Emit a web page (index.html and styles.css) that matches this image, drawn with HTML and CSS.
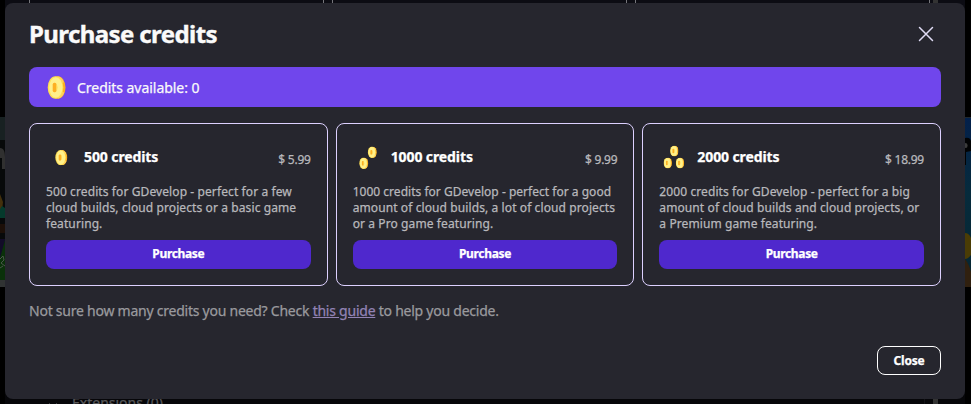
FILE: index.html
```
<!DOCTYPE html>
<html lang="en">
<head>
<meta charset="utf-8">
<title>Purchase credits</title>
<link rel="stylesheet" href="styles.css">
</head>
<body>
<svg class="defs" aria-hidden="true">
  <symbol id="coin" viewBox="0 0 18 23">
    <ellipse cx="10.2" cy="11.5" rx="7.8" ry="11.2" fill="#fdb022"/>
    <path d="M10 .3c3 .3 5.500 2.500 6.400 6L12 8zM12 15l4.800 1.500c-1.200 3.500-3.500 5.800-6.300 6.200z" fill="#ffcf5c"/>
    <ellipse cx="8" cy="11.500" rx="7.800" ry="11.300" fill="#ffe052"/>
    <ellipse cx="8.300" cy="11.500" rx="6.600" ry="10.300" fill="#fff08a"/>
    <rect x="5.200" y="6.800" width="3.800" height="9.400" rx="1.700" fill="#fdb022"/>
    <path d="M8.600 8v7q1.400-.6 1.400-3.500T8.600 8z" fill="#ffd54f"/>
  </symbol>
</svg>
<div class="backdrop">
  <div class="peek peek-top"><i></i><i></i><i></i><i></i><i></i><i></i><b></b></div>
  <svg class="art art-left" viewBox="0 0 5 170" preserveAspectRatio="none">
    <rect width="5" height="170" fill="#07090a"/>
    <rect width="5" height="23" fill="#182122"/>
    <path d="M0 31c4 0 5 4 5 9v12H2V41H0z" fill="#303030"/>
    <path d="M0 77l3 8-1 9-2 3z" fill="#43300c"/>
    <path d="M0 92l2-3 3 2v10H0z" fill="#053a2c"/>
    <path d="M0 107h5v9H0z" fill="#1c0f08"/>
    <path d="M0 122h5v10l-5 9z" fill="#120c28"/>
    <path d="M0 141l5-18v40H0z" fill="#0a310a"/>
    <path d="M0 142l3-3 1 4-3 3 4 3M0 151l3-2" stroke="#4b564b" fill="none"/>
    <rect y="163" width="5" height="7" fill="#303333"/>
  </svg>
  <svg class="art art-right" viewBox="0 0 6 170" preserveAspectRatio="none">
    <defs><linearGradient id="sea" x2="0" y2="1"><stop stop-color="#03204b"/><stop offset=".45" stop-color="#062b3c"/><stop offset="1" stop-color="#062631"/></linearGradient></defs>
    <rect width="6" height="170" fill="url(#sea)"/>
    <path d="M0 21q5-1 6 3v10l-5 1v13H0z" fill="#020304"/>
    <ellipse cx=".8" cy="28.500" rx="1.800" ry="2.500" fill="#3c3c3c"/>
    <path d="M0 116q4 0 6 5v17q-3 4-6 4z" fill="#4a3c05"/>
    <path d="M0 142q4 5 6 13v15H0z" fill="#30200f"/>
    <rect width="6" height="1" fill="#20282e"/>
  </svg>
  <div class="peek peek-bottom"><svg class="chevron" viewBox="0 0 10 6"><path d="M1 1l4 4 4-4" fill="none" stroke="#3a3a3e"/></svg><span>Extensions (0)</span><i></i><b></b></div>
</div>
<main class="dialog" role="dialog">
  <header class="head">
    <h1>Purchase credits</h1>
    <svg class="x" viewBox="0 0 16 16"><path d="M1.500 1.500l13 13M14.500 1.500l-13 13"/></svg>
  </header>
  <div class="banner"><svg class="coin-lg"><use href="#coin"/></svg><span>Credits available: 0</span></div>
  <section class="cards">
    <article class="card">
      <div class="row">
        <svg class="coins" viewBox="0 0 30 30"><use href="#coin" x="9" y="7.800" width="12.500" height="15.500"/></svg>
        <h2>500 credits</h2><span class="price">$ 5.99</span>
      </div>
      <p>500 credits for GDevelop - perfect for a few<br>cloud builds, cloud projects or a basic game<br>featuring.</p>
      <button class="buy">Purchase</button>
    </article>
    <article class="card">
      <div class="row">
        <svg class="coins" viewBox="0 0 30 30"><use href="#coin" x="14.500" y="4.500" width="9.500" height="11.500"/><use href="#coin" x="6" y="15.500" width="9.500" height="11.500"/></svg>
        <h2>1000 credits</h2><span class="price">$ 9.99</span>
      </div>
      <p><span class="snug">1000 credits for GDevelop - perfect for a good</span><br>amount of cloud builds, a lot of cloud projects<br>or a Pro game featuring.</p>
      <button class="buy">Purchase</button>
    </article>
    <article class="card">
      <div class="row">
        <svg class="coins" viewBox="0 0 30 30"><use href="#coin" x="11" y="3.500" width="8.500" height="11"/><use href="#coin" x="4.500" y="15.500" width="8.500" height="11"/><use href="#coin" x="16.700" y="15.500" width="8.500" height="11"/></svg>
        <h2>2000 credits</h2><span class="price">$ 18.99</span>
      </div>
      <p>2000 credits for GDevelop - perfect for a big<br>amount of cloud builds and cloud projects, or<br>a Premium game featuring.</p>
      <button class="buy">Purchase</button>
    </article>
  </section>
  <p class="help">Not sure how many credits you need? Check <a href="#">this guide</a> to help you decide.</p>
  <footer><button class="close">Close</button></footer>
</main>
</body>
</html>
```
FILE: styles.css
```
*{box-sizing:border-box}
body{margin:0;width:971px;height:404px;overflow:hidden;background:#000;font-family:"Noto Sans","Open Sans",sans-serif;position:relative;-webkit-text-stroke:.25px currentColor}
h1,h2,p{margin:0}
button{font-family:inherit;padding:0;-webkit-text-stroke:.25px currentColor}
.defs{position:absolute;width:0;height:0}
.backdrop{position:absolute;inset:0}
.peek{position:absolute;left:5px;width:960px;background:#0c0c13}
.peek-top{top:0;height:12px}
.peek-bottom{top:390px;height:14px;background:#060609;color:#58585b;font-size:14px;line-height:20px}
.peek-bottom span{position:absolute;left:67px;top:3px}
.peek i{position:absolute;top:0;bottom:0;width:1px;background:#77777c}
.peek b{position:absolute;left:928px;top:0;bottom:0;width:5px;background:#333}
.peek-top i:nth-child(1){left:24px}
.peek-top i:nth-child(2){left:318px}
.peek-top i:nth-child(3){left:327px}
.peek-top i:nth-child(4){left:621px}
.peek-top i:nth-child(5){left:630px}
.peek-top i:nth-child(6){left:924px}
.peek-bottom i{left:919px;background:#121217}
.chevron{position:absolute;left:43px;top:12px;width:10px;height:6px}
.art{position:absolute;top:117px;height:170px}
.art-left{left:0;width:5px}
.art-right{left:965px;width:6px}
.dialog{position:relative;margin:3px 6px 0 5px;height:396px;padding:15px 24px 24px;border-radius:8px;background:#26262e;display:flex;flex-direction:column}
.head{display:flex;justify-content:space-between;align-items:center;height:32px;padding-right:7px}
h1{font-size:24px;line-height:32px;font-weight:700;letter-spacing:-.6px;color:#fafafa;-webkit-text-stroke-width:.4px}
.x{width:16px;height:16px;stroke:#e0dcf5;stroke-width:1.5;fill:none;stroke-linecap:round}
.banner{margin-top:17px;height:40px;flex:none;border-radius:8px;background:#7046ec;color:#fafafa;display:flex;align-items:center;padding-left:18px;gap:11px;font-size:14px;line-height:20px;letter-spacing:-.04px}
.banner span{padding-top:2px}
.coin-lg{width:19px;height:23px}
.cards{margin-top:16px;display:grid;grid-template-columns:repeat(3,1fr);gap:8px;flex:none}
.card{height:163px;border:1px solid #ddd1ff;border-radius:8px;padding:16px;display:flex;flex-direction:column}
.row{height:34px;display:flex;align-items:center}
.coins{width:30px;height:30px;flex:none}
h2{margin-left:8px;font-size:14px;line-height:20px;font-weight:700;letter-spacing:-.1px;color:#fff}
.price{margin-left:auto;margin-top:5px;font-size:12px;line-height:16px;letter-spacing:-.25px;color:#b8b8bc}
.card p{margin-top:10px;font-size:12px;line-height:16px;letter-spacing:.1px;white-space:nowrap;color:#b8b8bc}
.card .snug{letter-spacing:.02px}
.buy{margin-top:8px;height:29px;flex:none;border:0;border-radius:8px;background:#4f28cd;color:#fff;font-size:12px;line-height:16px;font-weight:700;letter-spacing:-.34px;padding-bottom:1px}
.help{margin-top:15px;font-size:14px;line-height:20px;letter-spacing:-.24px;color:#9a9a9e}
.help a{color:#9283b5;text-decoration:underline}
footer{margin-top:auto;display:flex;justify-content:flex-end}
.close{width:64px;height:29px;border:1px solid #fff;border-radius:8px;background:none;color:#fff;font-size:12px;font-weight:700;letter-spacing:-.2px;padding-bottom:1px}
```
